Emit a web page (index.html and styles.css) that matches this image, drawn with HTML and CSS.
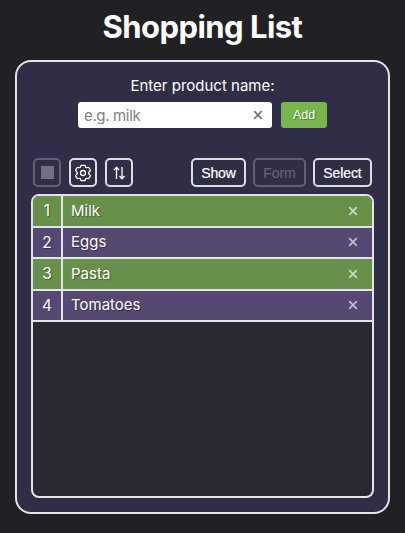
FILE: index.html
```html
<!DOCTYPE html>
<html lang="en">
<head>
<meta charset="utf-8">
<title>Shopping List</title>
<link rel="stylesheet" href="styles.css">
</head>
<body>
<h1>Shopping List</h1>
<main class="card">
  <form class="form">
    <label class="label" for="product">Enter product name:</label>
    <div class="entry">
      <div class="field">
        <input id="product" class="input" type="text" placeholder="e.g. milk">
        <svg class="cross" viewBox="0 0 10 10"><path d="M1.2 1.2l7.6 7.6M8.8 1.2l-7.6 7.6"/></svg>
      </div>
      <button class="add" type="button">Add</button>
    </div>
  </form>
  <div class="toolbar">
    <button class="btn icon disabled" type="button" aria-label="Stop"><span class="square"></span></button>
    <button class="btn icon" type="button" aria-label="Settings">
      <svg width="18" height="18" viewBox="0 0 18 18"><path d="M7.500 1.300h3Q11.200 1.300 11.300 2.100Q11.500 4.300 13.500 3.500Q14.500 3.100 15 3.800L16.200 5.900Q16.600 6.700 15.800 7.200Q13.400 9 15.800 10.800Q16.600 11.300 16.200 12.100L15 14.200Q14.500 14.900 13.500 14.500Q11.500 13.700 11.300 15.900Q11.200 16.700 10.500 16.700h-3Q6.800 16.700 6.700 15.900Q6.500 13.700 4.500 14.500Q3.500 14.900 3 14.200L1.800 12.100Q1.400 11.300 2.200 10.800Q4.600 9 2.200 7.200Q1.400 6.700 1.800 5.900L3 3.800Q3.500 3.100 4.500 3.500Q6.500 4.300 6.700 2.100Q6.800 1.300 7.500 1.300z"/><circle cx="9" cy="9" r="2.500"/></svg>
    </button>
    <button class="btn icon sort" type="button" aria-label="Sort">
      <svg width="16" height="16" viewBox="0 0 16 16"><path d="M5.500 14V2.500M3 5L5.500 2.300 8 5M11 2v11.500M8.500 11l2.500 2.700 2.500-2.700"/></svg>
    </button>
    <div class="actions">
      <button class="btn show" type="button">Show</button>
      <button class="btn form-btn disabled" type="button">Form</button>
      <button class="btn select" type="button">Select</button>
    </div>
  </div>
  <ol class="list">
    <li class="row"><span class="num">1</span><span class="name">Milk</span><svg class="cross" viewBox="0 0 10 10"><path d="M1.200 1.200l7.600 7.600M8.800 1.200l-7.600 7.600"/></svg></li>
    <li class="row"><span class="num">2</span><span class="name">Eggs</span><svg class="cross" viewBox="0 0 10 10"><path d="M1.200 1.200l7.600 7.600M8.800 1.200l-7.600 7.600"/></svg></li>
    <li class="row"><span class="num">3</span><span class="name">Pasta</span><svg class="cross" viewBox="0 0 10 10"><path d="M1.200 1.200l7.600 7.600M8.800 1.200l-7.600 7.600"/></svg></li>
    <li class="row"><span class="num">4</span><span class="name">Tomatoes</span><svg class="cross" viewBox="0 0 10 10"><path d="M1.200 1.200l7.600 7.600M8.800 1.200l-7.600 7.600"/></svg></li>
  </ol>
</main>
</body>
</html>
```
FILE: styles.css
```css
* { box-sizing: border-box; }
body {
  margin: 0;
  height: 533px;
  padding: 7px 15px 19px;
  display: flex;
  flex-direction: column;
  overflow: hidden;
  background: #212025;
  color: #fff;
  font: 16px/20px Inter, sans-serif;
}
h1 {
  margin: 0 0 13px;
  text-align: center;
  font-size: 31px;
  line-height: 40px;
  font-weight: 700;
  letter-spacing: -0.55px;
}
.card {
  flex: 1;
  display: flex;
  flex-direction: column;
  padding: 14px;
  border: 2px solid #e4e3e9;
  border-radius: 16px;
  background: #2f2e46;
}
.label {
  display: block;
  text-align: center;
  font-size: 15px;
}
.entry {
  display: flex;
  justify-content: center;
  gap: 9px;
  margin-top: 6px;
}
.field {
  display: flex;
  align-items: center;
  width: 194px;
  height: 26px;
  padding: 0 9px 0 6px;
  border-radius: 3px;
  background: #fff;
}
.input {
  flex: 1;
  min-width: 0;
  padding: 0;
  border: 0;
  background: none;
  font: 15px Inter, sans-serif;
  letter-spacing: -0.35px;
}
.input::placeholder { color: #808080; }
.cross { width: 10px; height: 10px; flex: none; }
.cross path { fill: none; stroke: currentColor; stroke-width: 1.7; }
.field .cross { color: #777; }
.add {
  width: 46px;
  height: 26px;
  padding: 0;
  border: 0;
  border-radius: 3px;
  background: #77b64c;
  color: #fff;
  font: 12.5px "Liberation Sans", sans-serif;
  text-shadow: 1px 1px 1px #0006;
}
.toolbar {
  display: flex;
  gap: 8px;
  margin: 30px 2px 7px 2px;
}
.actions { display: flex; gap: 7px; margin-left: auto; }
.btn {
  display: flex;
  align-items: center;
  justify-content: center;
  height: 29px;
  padding: 0;
  border: 2px solid #dedde3;
  border-radius: 5px;
  background: none;
  color: #fff;
  font: 14px "Liberation Sans", sans-serif;
  letter-spacing: -0.1px;
  -webkit-text-stroke: 0.2px currentColor;
}
.icon { width: 28px; }
.show { width: 55px; }
.form-btn { width: 53px; }
.select { width: 59px; }
.disabled { border-color: #626172; color: #666575; }
.square { width: 13px; height: 13px; background: #747281; }
.btn svg { flex: none; fill: none; stroke: #fff; stroke-width: 1.3; stroke-linejoin: round; }
.list {
  flex: 1;
  margin: 0;
  padding: 0;
  overflow: hidden;
  list-style: none;
  border: 2px solid #e4e3e9;
  border-radius: 8px;
  background: #292833;
}
.row {
  display: flex;
  align-items: center;
  height: 31.5px;
  padding-right: 14px;
  border-bottom: 2px solid #e4e3e9;
  background: #554973;
  text-shadow: 1px 1px 1px #0006;
}
.row:nth-child(odd) { background: #67914a; }
.num {
  width: 30px;
  height: 100%;
  border-right: 2px solid #e4e3e9;
  text-align: center;
  font-size: 15.5px;
  line-height: 30px;
}
.name { flex: 1; padding-left: 8px; font-size: 15px; line-height: 30px; }
.row .cross { color: #ffffffa6; }
```
